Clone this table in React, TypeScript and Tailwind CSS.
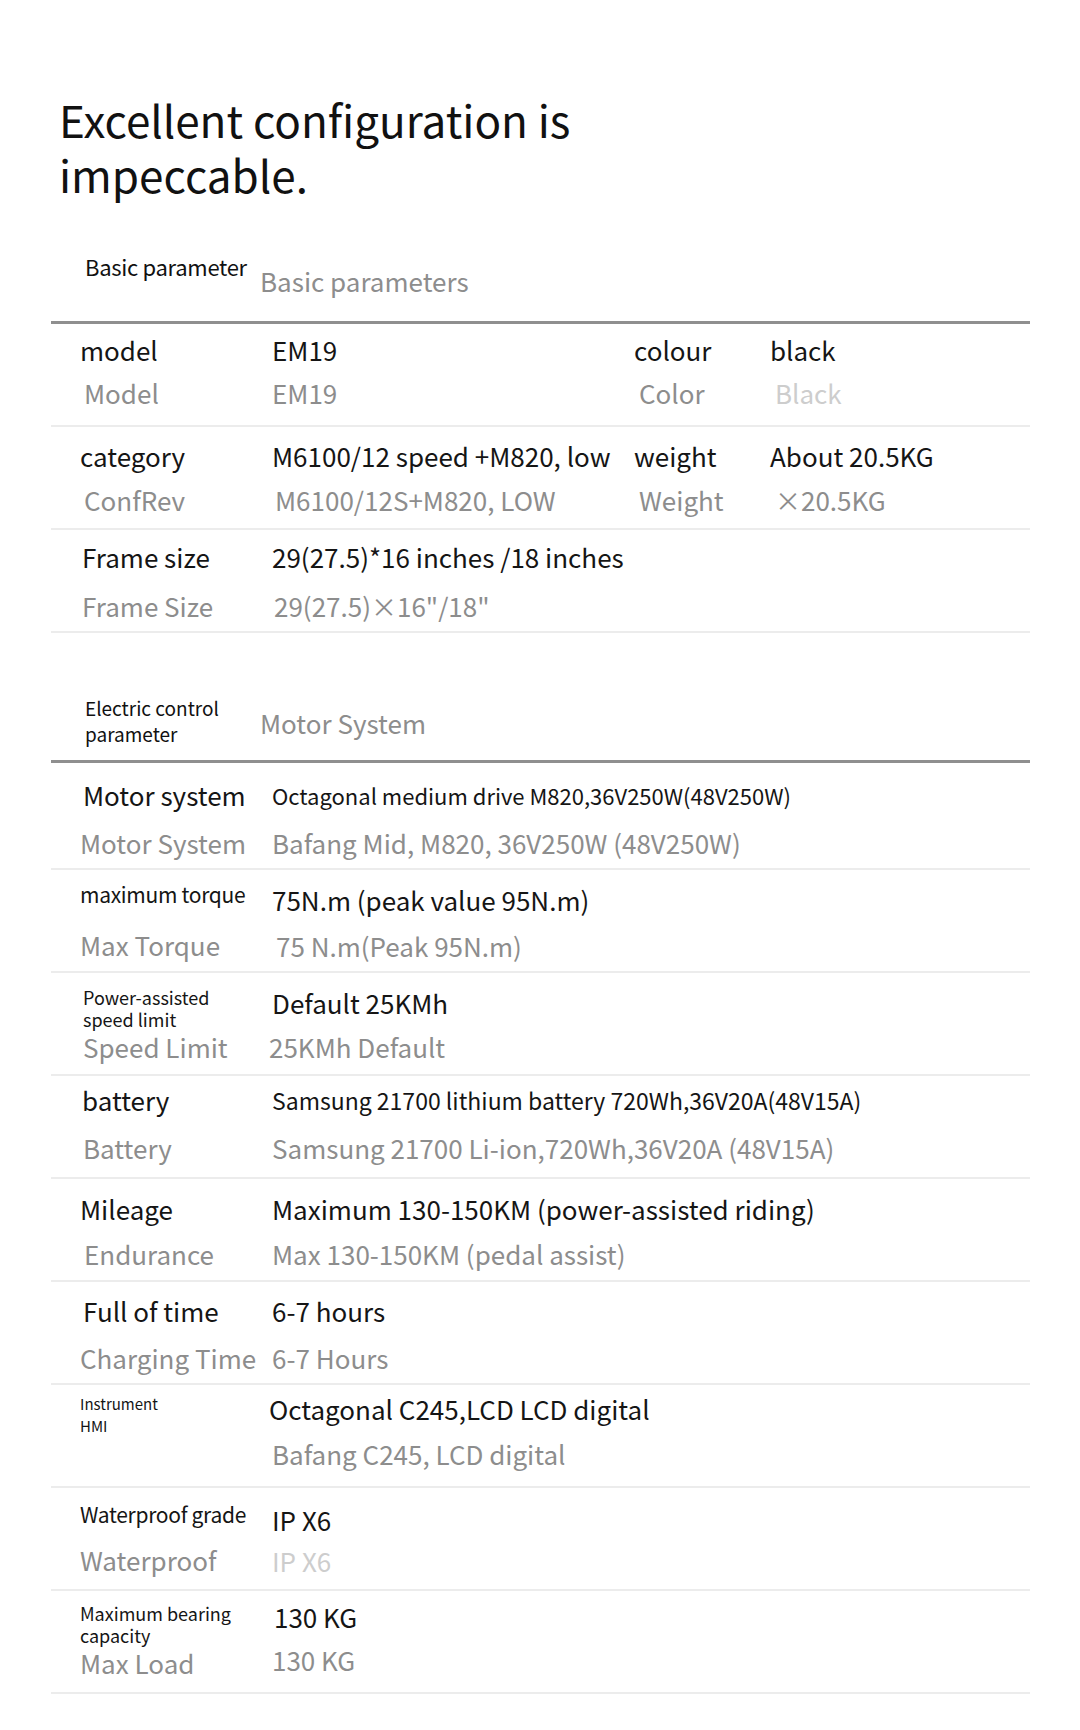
import React from 'react';

const font = { fontFamily: '"Noto Sans CJK SC", "Noto Sans", sans-serif' };

function Main({ children, className = '' }: { children: React.ReactNode; className?: string }) {
  return <div className={`text-[26px] leading-[32px] text-[#151515] whitespace-nowrap ${className}`}>{children}</div>;
}

function Sub({ children, className = '' }: { children: React.ReactNode; className?: string }) {
  return <div className={`text-[26px] leading-[32px] text-[#8d8d8d] whitespace-nowrap ${className}`}>{children}</div>;
}

function Small({ children, className = '' }: { children: React.ReactNode; className?: string }) {
  return <div className={`leading-[22px] text-[#151515] whitespace-nowrap ${className}`}>{children}</div>;
}

// table row: label cell, value cell, optional extra cells (colour / weight)
function Row({
  left,
  right,
  extra,
  className = 'h-[103px]',
}: {
  left: React.ReactNode;
  right: React.ReactNode;
  extra?: React.ReactNode;
  className?: string;
}) {
  return (
    <div className={`flex border-b-2 border-[#ececec] ${className}`}>
      <div className="w-[221px] shrink-0 pl-[29px] flex flex-col">{left}</div>
      <div className={`flex flex-col ${extra ? 'w-[362px] shrink-0' : 'flex-1'}`}>{right}</div>
      {extra}
    </div>
  );
}

export default function App() {
  return (
    <div className="w-[1080px] h-[1730px] bg-white overflow-hidden" style={font}>
      <h1 className="ml-[59px] pt-[92px] text-[44px] leading-[55px] text-[#111]">
        Excellent configuration is
        <br />
        impeccable.
      </h1>

      <div className="ml-[51px] w-[979px]">
        {/* Basic parameters */}
        <div className="flex h-[119px]">
          <div className="w-[209px] pl-[34px] pt-[50px] text-[22px] leading-[28px] text-[#111] whitespace-nowrap tracking-[-0.3px]">
            Basic parameter
          </div>
          <div className="pt-[63px] text-[26px] leading-[32px] text-[#8d8d8d]">Basic parameters</div>
        </div>
        <div className="h-[3px] bg-[#8f8f8f]" />

        <Row
          left={
            <>
              <Main className="mt-[10px]">model</Main>
              <Sub className="mt-[11px] ml-[4px]">Model</Sub>
            </>
          }
          right={
            <>
              <Main className="mt-[10px]">EM19</Main>
              <Sub className="mt-[11px]">EM19</Sub>
            </>
          }
          extra={
            <>
              <div className="w-[136px] flex flex-col">
                <Main className="mt-[10px]">colour</Main>
                <Sub className="mt-[11px] ml-[5px]">Color</Sub>
              </div>
              <div className="flex flex-col">
                <Main className="mt-[10px]">black</Main>
                <Sub className="mt-[11px] ml-[5px] text-[#cdcdcd]">Black</Sub>
              </div>
            </>
          }
        />

        <Row
          left={
            <>
              <Main className="mt-[13px]">category</Main>
              <Sub className="mt-[12px] ml-[4px]">ConfRev</Sub>
            </>
          }
          right={
            <>
              <Main className="mt-[13px]">M6100/12 speed +M820, low</Main>
              <Sub className="mt-[12px] ml-[3px]">M6100/12S+M820, LOW</Sub>
            </>
          }
          extra={
            <>
              <div className="w-[136px] flex flex-col">
                <Main className="mt-[13px]">weight</Main>
                <Sub className="mt-[12px] ml-[5px]">Weight</Sub>
              </div>
              <div className="flex flex-col">
                <Main className="mt-[13px]">About 20.5KG</Main>
                <Sub className="mt-[12px] ml-[5px]">×20.5KG</Sub>
              </div>
            </>
          }
        />

        <Row
          left={
            <>
              <Main className="mt-[11px] ml-[2px]">Frame size</Main>
              <Sub className="mt-[17px] ml-[2px]">Frame Size</Sub>
            </>
          }
          right={
            <>
              <Main className="mt-[11px]">29(27.5)*16 inches /18 inches</Main>
              <Sub className="mt-[17px] ml-[2px]">29(27.5)×16"/18"</Sub>
            </>
          }
        />

        {/* Motor system */}
        <div className="flex h-[127px]">
          <div className="w-[209px] pl-[34px] pt-[62px] text-[19px] leading-[26px] text-[#111] whitespace-nowrap">
            Electric control
            <br />
            parameter
          </div>
          <div className="pt-[74px] text-[26px] leading-[32px] text-[#8d8d8d]">Motor System</div>
        </div>
        <div className="h-[3px] bg-[#8f8f8f]" />

        <Row
          className="h-[107px]"
          left={
            <>
              <Main className="mt-[16px] ml-[3px]">Motor system</Main>
              <Sub className="mt-[16px]">Motor System</Sub>
            </>
          }
          right={
            <>
              <div className="mt-[16px] text-[22px] leading-[32px] text-[#151515] whitespace-nowrap">
                Octagonal medium drive M820,36V250W(48V250W)
              </div>
              <Sub className="mt-[16px]">Bafang Mid, M820, 36V250W (48V250W)</Sub>
            </>
          }
        />

        <Row
          left={
            <>
              <Small className="mt-[13px] text-[21px] tracking-[-0.3px]">maximum torque</Small>
              <Sub className="mt-[24px]">Max Torque</Sub>
            </>
          }
          right={
            <>
              <Main className="mt-[14px]">75N.m (peak value 95N.m)</Main>
              <Sub className="mt-[14px] ml-[4px]">75 N.m(Peak 95N.m)</Sub>
            </>
          }
        />

        <Row
          left={
            <>
              <Small className="mt-[13px] ml-[3px] text-[18px]">
                Power-assisted
                <br />
                speed limit
              </Small>
              <Sub className="mt-[1px] ml-[3px]">Speed Limit</Sub>
            </>
          }
          right={
            <>
              <Main className="mt-[14px]">Default 25KMh</Main>
              <Sub className="mt-[12px] -ml-[3px]">25KMh Default</Sub>
            </>
          }
        />

        <Row
          left={
            <>
              <Main className="mt-[8px] ml-[2px]">battery</Main>
              <Sub className="mt-[16px] ml-[3px]">Battery</Sub>
            </>
          }
          right={
            <>
              <div className="mt-[8px] text-[23px] leading-[32px] text-[#151515] whitespace-nowrap">
                Samsung 21700 lithium battery 720Wh,36V20A(48V15A)
              </div>
              <Sub className="mt-[16px] text-[26.5px]">Samsung 21700 Li-ion,720Wh,36V20A (48V15A)</Sub>
            </>
          }
        />

        <Row
          left={
            <>
              <Main className="mt-[14px]">Mileage</Main>
              <Sub className="mt-[13px] ml-[4px]">Endurance</Sub>
            </>
          }
          right={
            <>
              <Main className="mt-[14px]">Maximum 130-150KM (power-assisted riding)</Main>
              <Sub className="mt-[13px]">Max 130-150KM (pedal assist)</Sub>
            </>
          }
        />

        <Row
          left={
            <>
              <Main className="mt-[13px] ml-[3px]">Full of time</Main>
              <Sub className="mt-[15px] text-[24px]">Charging Time</Sub>
            </>
          }
          right={
            <>
              <Main className="mt-[13px]">6-7 hours</Main>
              <Sub className="mt-[15px]">6-7 Hours</Sub>
            </>
          }
        />

        <Row
          left={
            <Small className="mt-[8px] text-[15px] leading-[20px]">
              Instrument
              <br />
              HMI
            </Small>
          }
          right={
            <>
              <Main className="mt-[8px] -ml-[3px]">Octagonal C245,LCD LCD digital</Main>
              <Sub className="mt-[13px]">Bafang C245, LCD digital</Sub>
            </>
          }
        />

        <Row
          left={
            <>
              <Small className="mt-[15px] text-[21px] tracking-[-0.3px]">Waterproof grade</Small>
              <Sub className="mt-[19px]">Waterproof</Sub>
            </>
          }
          right={
            <>
              <Main className="mt-[16px]">IP X6</Main>
              <Sub className="mt-[9px] text-[#cdcdcd]">IP X6</Sub>
            </>
          }
        />

        <Row
          left={
            <>
              <Small className="mt-[11px] text-[18px]">
                Maximum bearing
                <br />
                capacity
              </Small>
              <Sub className="mt-[1px]">Max Load</Sub>
            </>
          }
          right={
            <>
              <Main className="mt-[10px] ml-[2px]">130 KG</Main>
              <Sub className="mt-[11px]">130 KG</Sub>
            </>
          }
        />
      </div>
    </div>
  );
}
